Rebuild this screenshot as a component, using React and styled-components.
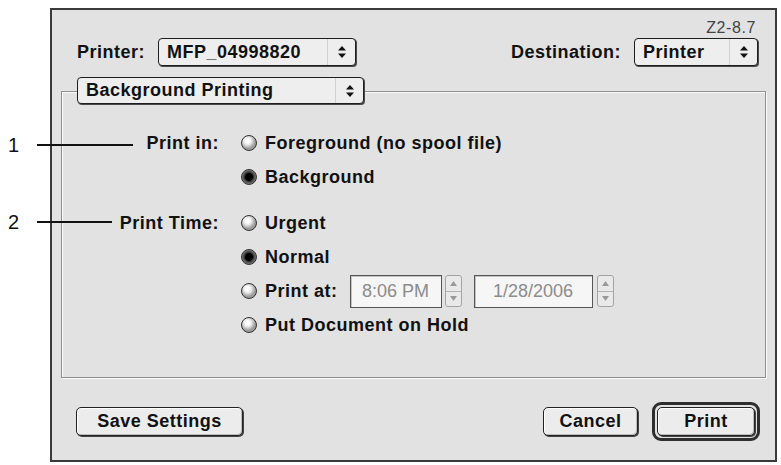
import styled, { createGlobalStyle } from "styled-components";

const GlobalStyle = createGlobalStyle`
  html, body {
    margin: 0;
    background: #ffffff;
  }
  body {
    font-family: "Liberation Sans", Arial, sans-serif;
  }
`;

const Stage = styled.div`
  position: relative;
  width: 781px;
  height: 465px;
  padding: 8px 0 0 50px;
  box-sizing: border-box;
`;

const Window = styled.div`
  width: 727px;
  height: 454px;
  box-sizing: border-box;
  border: 2px solid #3a3a3a;
  background: #e2e2e2;
  display: flex;
  flex-direction: column;
  font-size: 18px;
  font-weight: 700;
  letter-spacing: 0.5px;
  color: #111;
`;

const Tag = styled.div`
  margin-top: 12px;
  padding-right: 19px;
  text-align: right;
  font-size: 16px;
  font-weight: 400;
  letter-spacing: 0.6px;
  line-height: 12px;
  color: #444;
`;

const TopRow = styled.div`
  margin-top: 4px;
  padding: 0 17px 0 25px;
  height: 28px;
  display: flex;
  align-items: center;
  justify-content: space-between;
`;

const Field = styled.div`
  display: flex;
  align-items: center;
  gap: 13px;
`;

const PopupBox = styled.div`
  display: flex;
  width: ${(p) => p.$width}px;
  height: ${(p) => p.$height}px;
  box-sizing: border-box;
  border: 1px solid #1e1e1e;
  border-radius: 4px;
  box-shadow: 1px 1px 0 #4a4a4a;
  background: #eeeeee;
  margin: ${(p) => p.$margin || "0"};
  flex: none;
`;

const PopupText = styled.span`
  flex: 1;
  padding-left: 8px;
  display: flex;
  align-items: center;
  white-space: nowrap;
`;

const PopupArrow = styled.span`
  width: 27px;
  border-left: 1px solid #d0d0d0;
  display: flex;
  align-items: center;
  justify-content: center;
`;

const Group = styled.div`
  margin: 25px 9px 0;
  height: 287px;
  box-sizing: border-box;
  border: 1px solid #8f8f8f;
  box-shadow: 1px 1px 0 #fafafa, inset 1px 1px 0 #fafafa;
  display: flex;
  flex-direction: column;
`;

const Settings = styled.div`
  margin-top: 22px;
  display: grid;
  grid-template-columns: 157px auto;
  column-gap: 22px;
  row-gap: 12px;
  align-items: start;
`;

const SettingLabel = styled.div`
  text-align: right;
  line-height: 34px;
  white-space: nowrap;
`;

const Options = styled.div`
  display: flex;
  flex-direction: column;
`;

const Option = styled.div`
  display: flex;
  align-items: center;
  height: 34px;
  white-space: nowrap;
`;

const Radio = styled.span`
  width: 16px;
  height: 16px;
  flex: none;
  box-sizing: border-box;
  border-radius: 50%;
  border: 1px solid #333;
  margin-right: 8px;
  background: ${(p) =>
    p.$checked
      ? "radial-gradient(circle, #000 0 3.5px, #333 4.5px, #7a7a7a 7px)"
      : "radial-gradient(circle at 40% 35%, #fff 0 2px, #e6e6e6 4px, #9c9c9c 7.5px)"};
`;

const TimeField = styled.div`
  width: ${(p) => p.$width}px;
  height: 33px;
  box-sizing: border-box;
  margin-left: ${(p) => p.$gap}px;
  border: 1px solid #555;
  box-shadow: inset 1px 1px 0 #c4c4c4;
  background: #f6f6f6;
  color: #8c8c8c;
  font-weight: 400;
  font-size: 18px;
  letter-spacing: 0;
  display: flex;
  align-items: center;
  justify-content: center;
`;

const Stepper = styled.div`
  width: 17px;
  height: 32px;
  box-sizing: border-box;
  margin-left: ${(p) => p.$gap}px;
  border: 1px solid #a4a4a4;
  border-radius: 3px;
  background: #e9e9e9;
  display: flex;
  flex-direction: column;
`;

const StepHalf = styled.span`
  flex: 1;
  display: flex;
  align-items: center;
  justify-content: center;
  & + & {
    border-top: 1px solid #b4b4b4;
  }
`;

const ButtonRow = styled.div`
  margin-top: 24px;
  height: 39px;
  padding: 0 15px 0 24px;
  display: flex;
  align-items: center;
  justify-content: space-between;
`;

const ButtonGroup = styled.div`
  display: flex;
  align-items: center;
  gap: 14px;
`;

const Button = styled.button`
  width: ${(p) => p.$width}px;
  height: 29px;
  padding: 0;
  font: 700 18px "Liberation Sans", Arial, sans-serif;
  letter-spacing: 0.5px;
  color: #111;
  background: #ececec;
  border: 1px solid #222;
  border-radius: 5px;
  box-shadow: 1px 1px 0 #444, inset -1px -1px 0 #bdbdbd, inset 1px 1px 0 #fff;
`;

const DefaultRing = styled.div`
  display: flex;
  padding: 2px;
  border: 3px solid #2e2e2e;
  border-radius: 9px;
`;

const Callout = styled.div`
  position: absolute;
  left: 8px;
  top: ${(p) => p.$top}px;
  height: 22px;
  display: flex;
  align-items: center;
`;

const CalloutNumber = styled.span`
  width: 29px;
  font: 400 20px "Liberation Sans", Arial, sans-serif;
  color: #111;
`;

const CalloutLine = styled.span`
  width: ${(p) => p.$length}px;
  height: 2px;
  background: #111;
`;

const UpDown = () => (
  <svg width="8" height="12" viewBox="0 0 8 12">
    <polygon points="4,0 8,4.5 0,4.5" fill="#111" />
    <polygon points="0,7.5 8,7.5 4,12" fill="#111" />
  </svg>
);

const Popup = ({ width, height = 28, margin, children }) => (
  <PopupBox $width={width} $height={height} $margin={margin}>
    <PopupText>{children}</PopupText>
    <PopupArrow>
      <UpDown />
    </PopupArrow>
  </PopupBox>
);

const Tri = ({ down }) => (
  <svg width="7" height="5" viewBox="0 0 7 5">
    <polygon points={down ? "0,0 7,0 3.5,5" : "3.5,0 7,5 0,5"} fill="#9a9a9a" />
  </svg>
);

const Spinner = ({ gap }) => (
  <Stepper $gap={gap}>
    <StepHalf>
      <Tri />
    </StepHalf>
    <StepHalf>
      <Tri down />
    </StepHalf>
  </Stepper>
);

const RadioOption = ({ checked, children }) => (
  <Option>
    <Radio $checked={checked} />
    {children}
  </Option>
);

export default function App() {
  return (
    <Stage>
      <GlobalStyle />
      <Window>
        <Tag>Z2-8.7</Tag>
        <TopRow>
          <Field>
            Printer:
            <Popup width={198}>MFP_04998820</Popup>
          </Field>
          <Field>
            Destination:
            <Popup width={124}>Printer</Popup>
          </Field>
        </TopRow>
        <Group>
          <Popup width={287} height={27} margin="-15px 0 0 15px">
            Background Printing
          </Popup>
          <Settings>
            <SettingLabel>Print in:</SettingLabel>
            <Options>
              <RadioOption>Foreground (no spool file)</RadioOption>
              <RadioOption checked>Background</RadioOption>
            </Options>
            <SettingLabel>Print Time:</SettingLabel>
            <Options>
              <RadioOption>Urgent</RadioOption>
              <RadioOption checked>Normal</RadioOption>
              <RadioOption>
                Print at:
                <TimeField $width={92} $gap={12}>8:06 PM</TimeField>
                <Spinner gap={3} />
                <TimeField $width={119} $gap={12}>1/28/2006</TimeField>
                <Spinner gap={4} />
              </RadioOption>
              <RadioOption>Put Document on Hold</RadioOption>
            </Options>
          </Settings>
        </Group>
        <ButtonRow>
          <Button $width={167}>Save Settings</Button>
          <ButtonGroup>
            <Button $width={95}>Cancel</Button>
            <DefaultRing>
              <Button $width={98}>Print</Button>
            </DefaultRing>
          </ButtonGroup>
        </ButtonRow>
      </Window>
      <Callout $top={134}>
        <CalloutNumber>1</CalloutNumber>
        <CalloutLine $length={96} />
      </Callout>
      <Callout $top={211}>
        <CalloutNumber>2</CalloutNumber>
        <CalloutLine $length={75} />
      </Callout>
    </Stage>
  );
}
